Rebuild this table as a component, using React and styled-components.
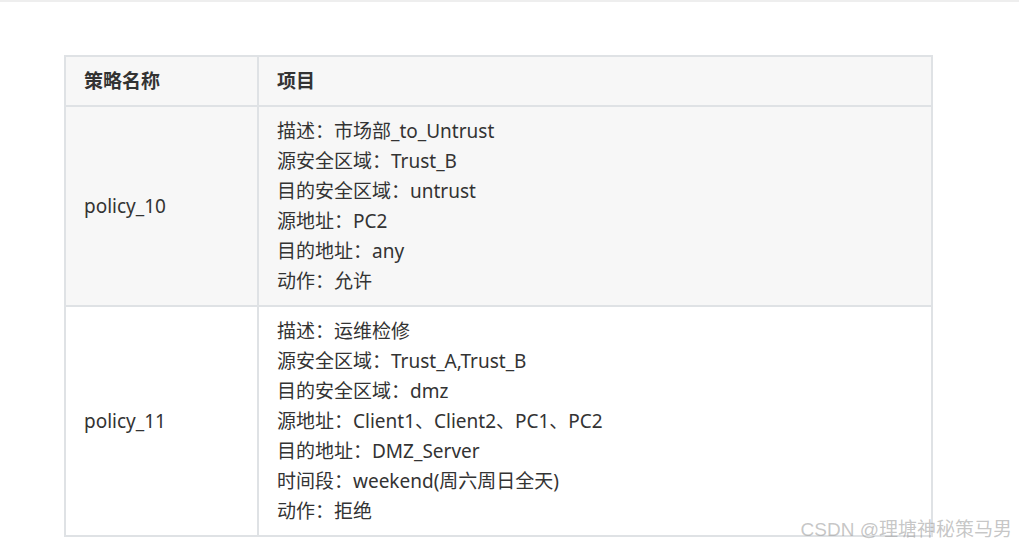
import React from 'react';
import styled, { createGlobalStyle } from 'styled-components';

const GlobalStyle = createGlobalStyle`
  html, body {
    margin: 0;
    padding: 0;
    background: #fff;
  }
  body {
    font-family: "Noto Sans", "Noto Sans CJK SC", sans-serif;
    color: #333;
  }
`;

const Page = styled.div`
  position: relative;
  height: 549px;
  box-sizing: border-box;
  border-top: 2px solid #eeeeee;
  padding: 53px 0 0 64px;
  overflow: hidden;
`;

const Table = styled.table`
  border-collapse: collapse;
  table-layout: fixed;
  width: 869px;
  font-size: 19px;
  line-height: 30px;
  border: 2px solid #dfe2e5;
`;

const Row = styled.tr`
  background: ${p => (p.$striped ? '#f7f7f7' : '#fff')};
`;

const HeadCell = styled.th`
  border: 2px solid #dfe2e5;
  padding: 9px 18px;
  text-align: left;
  font-weight: 700;
  color: #333;
`;

const Cell = styled.td`
  border: 2px solid #dfe2e5;
  padding: 9px 18px;
  vertical-align: middle;
  color: #333;
`;

const Line = styled.div`
  white-space: nowrap;
`;

const Watermark = styled.div`
  position: absolute;
  right: 7px;
  bottom: 8px;
  font-family: "Liberation Sans", "Noto Sans CJK SC", sans-serif;
  font-size: 19px;
  line-height: 22px;
  color: rgba(150, 150, 150, 0.55);
  white-space: nowrap;
`;

const policies = [
  {
    name: 'policy_10',
    items: [
      '描述：市场部_to_Untrust',
      '源安全区域：Trust_B',
      '目的安全区域：untrust',
      '源地址：PC2',
      '目的地址：any',
      '动作：允许'
    ]
  },
  {
    name: 'policy_11',
    items: [
      '描述：运维检修',
      '源安全区域：Trust_A,Trust_B',
      '目的安全区域：dmz',
      '源地址：Client1、Client2、PC1、PC2',
      '目的地址：DMZ_Server',
      '时间段：weekend(周六周日全天)',
      '动作：拒绝'
    ]
  }
];

export default function App() {
  return (
    <Page>
      <GlobalStyle />
      <Table>
        <colgroup>
          <col style={{ width: 193 }} />
          <col />
        </colgroup>
        <thead>
          <Row $striped>
            <HeadCell>策略名称</HeadCell>
            <HeadCell>项目</HeadCell>
          </Row>
        </thead>
        <tbody>
          {policies.map((p, i) => (
            <Row key={p.name} $striped={i % 2 === 0}>
              <Cell>{p.name}</Cell>
              <Cell>
                {p.items.map(t => (
                  <Line key={t}>{t}</Line>
                ))}
              </Cell>
            </Row>
          ))}
        </tbody>
      </Table>
      <Watermark>CSDN @理塘神秘策马男</Watermark>
    </Page>
  );
}
